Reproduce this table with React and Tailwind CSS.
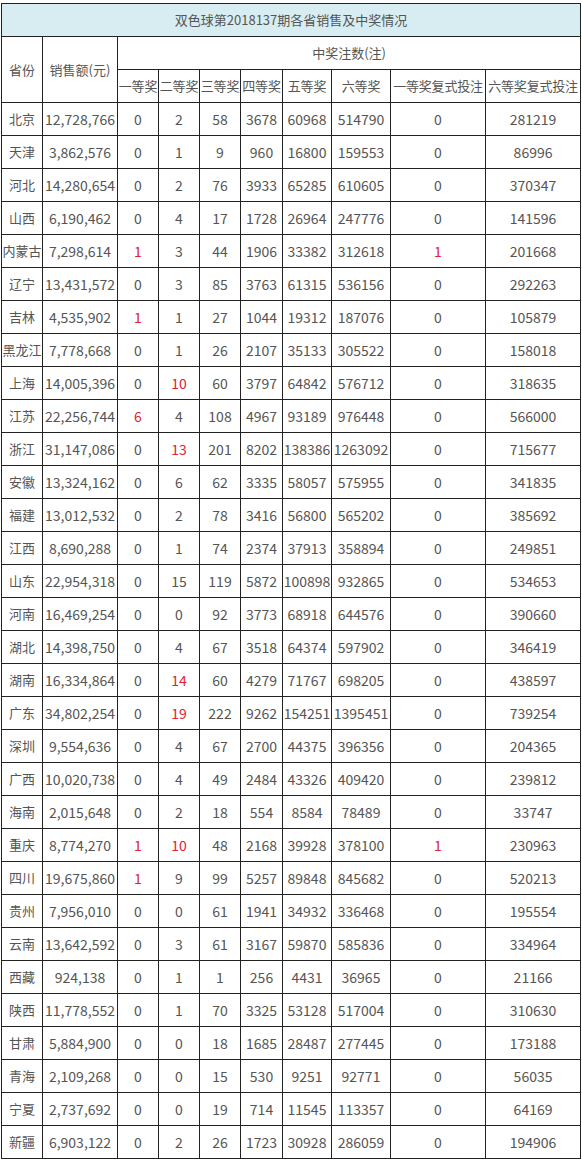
import React from 'react'

const rows = [
  ['北京', '12,728,766', '0', '2', '58', '3678', '60968', '514790', '0', '281219'],
  ['天津', '3,862,576', '0', '1', '9', '960', '16800', '159553', '0', '86996'],
  ['河北', '14,280,654', '0', '2', '76', '3933', '65285', '610605', '0', '370347'],
  ['山西', '6,190,462', '0', '4', '17', '1728', '26964', '247776', '0', '141596'],
  ['内蒙古', '7,298,614', '1*', '3', '44', '1906', '33382', '312618', '1*', '201668'],
  ['辽宁', '13,431,572', '0', '3', '85', '3763', '61315', '536156', '0', '292263'],
  ['吉林', '4,535,902', '1*', '1', '27', '1044', '19312', '187076', '0', '105879'],
  ['黑龙江', '7,778,668', '0', '1', '26', '2107', '35133', '305522', '0', '158018'],
  ['上海', '14,005,396', '0', '10*', '60', '3797', '64842', '576712', '0', '318635'],
  ['江苏', '22,256,744', '6*', '4', '108', '4967', '93189', '976448', '0', '566000'],
  ['浙江', '31,147,086', '0', '13*', '201', '8202', '138386', '1263092', '0', '715677'],
  ['安徽', '13,324,162', '0', '6', '62', '3335', '58057', '575955', '0', '341835'],
  ['福建', '13,012,532', '0', '2', '78', '3416', '56800', '565202', '0', '385692'],
  ['江西', '8,690,288', '0', '1', '74', '2374', '37913', '358894', '0', '249851'],
  ['山东', '22,954,318', '0', '15', '119', '5872', '100898', '932865', '0', '534653'],
  ['河南', '16,469,254', '0', '0', '92', '3773', '68918', '644576', '0', '390660'],
  ['湖北', '14,398,750', '0', '4', '67', '3518', '64374', '597902', '0', '346419'],
  ['湖南', '16,334,864', '0', '14*', '60', '4279', '71767', '698205', '0', '438597'],
  ['广东', '34,802,254', '0', '19*', '222', '9262', '154251', '1395451', '0', '739254'],
  ['深圳', '9,554,636', '0', '4', '67', '2700', '44375', '396356', '0', '204365'],
  ['广西', '10,020,738', '0', '4', '49', '2484', '43326', '409420', '0', '239812'],
  ['海南', '2,015,648', '0', '2', '18', '554', '8584', '78489', '0', '33747'],
  ['重庆', '8,774,270', '1*', '10*', '48', '2168', '39928', '378100', '1*', '230963'],
  ['四川', '19,675,860', '1*', '9', '99', '5257', '89848', '845682', '0', '520213'],
  ['贵州', '7,956,010', '0', '0', '61', '1941', '34932', '336468', '0', '195554'],
  ['云南', '13,642,592', '0', '3', '61', '3167', '59870', '585836', '0', '334964'],
  ['西藏', '924,138', '0', '1', '1', '256', '4431', '36965', '0', '21166'],
  ['陕西', '11,778,552', '0', '1', '70', '3325', '53128', '517004', '0', '310630'],
  ['甘肃', '5,884,900', '0', '0', '18', '1685', '28487', '277445', '0', '173188'],
  ['青海', '2,109,268', '0', '0', '15', '530', '9251', '92771', '0', '56035'],
  ['宁夏', '2,737,692', '0', '0', '19', '714', '11545', '113357', '0', '64169'],
  ['新疆', '6,903,122', '0', '2', '26', '1723', '30928', '286059', '0', '194906'],
]

const widths = [41, 75, 41, 41, 41, 42, 49, 59, 95, 95]
const prizes = ['一等奖', '二等奖', '三等奖', '四等奖', '五等奖', '六等奖', '一等奖复式投注', '六等奖复式投注']

const cell = 'border border-[#222] h-[33px] p-0 text-center align-middle whitespace-nowrap overflow-visible'

export default function App() {
  return (
    <div className="bg-white w-[582px] h-[1162px] pt-[3px] pl-[1px] text-[#555] font-['Noto_Sans_CJK_SC','Noto_Sans',sans-serif]">
      <table className="table-fixed border-collapse w-[579px] border border-[#222]">
        <colgroup>
          {widths.map((w, i) => (
            <col key={i} style={{ width: w }} />
          ))}
        </colgroup>
        <thead>
          <tr>
            <td colSpan={10} className={`${cell} bg-[#d8edf2] text-[13px]`}>
              双色球第2018137期各省销售及中奖情况
            </td>
          </tr>
          <tr>
            <td rowSpan={2} className={`${cell} text-[13px]`}>省份</td>
            <td rowSpan={2} className={`${cell} text-[13px]`}>销售额(元)</td>
            <td colSpan={8} className={`${cell} text-[13px]`}>中奖注数(注)</td>
          </tr>
          <tr>
            {prizes.map((p) => (
              <td key={p} className={`${cell} text-[13px] tracking-[-0.2px]`}>{p}</td>
            ))}
          </tr>
        </thead>
        <tbody>
          {rows.map((r) => (
            <tr key={r[0]}>
              <td className={`${cell} text-[13px]`}>{r[0]}</td>
              {r.slice(1).map((v, i) => {
                const red = v.endsWith('*')
                return (
                  <td key={i} className={`${cell} text-[14px] ${red ? 'text-[#dd2233]' : ''}`}>
                    {red ? v.slice(0, -1) : v}
                  </td>
                )
              })}
            </tr>
          ))}
        </tbody>
      </table>
    </div>
  )
}
